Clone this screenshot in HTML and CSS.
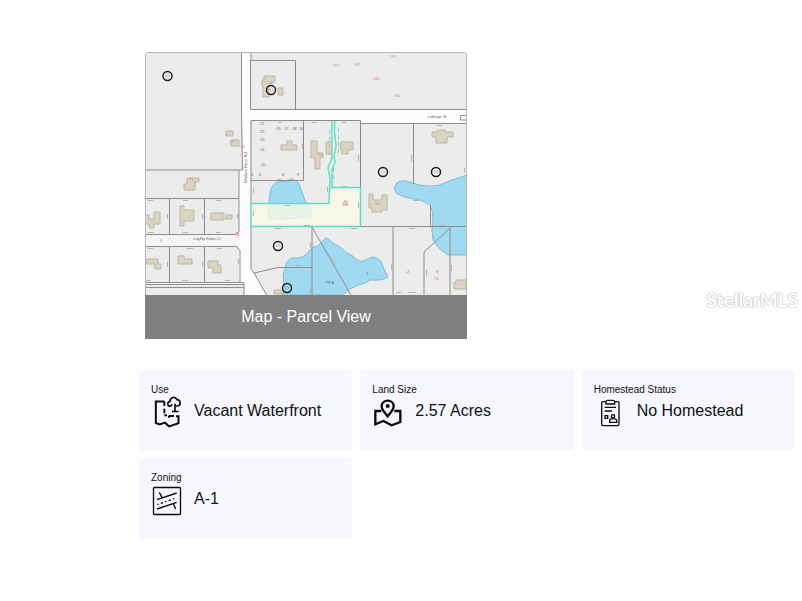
FILE: index.html
```html
<!DOCTYPE html>
<html lang="en">
<head>
<meta charset="utf-8">
<meta name="viewport" content="width=device-width, initial-scale=1">
<title>Parcel details</title>
<link rel="stylesheet" href="styles.css">
</head>
<body>
<main class="page">
  <figure class="parcel">
    <svg class="map" viewBox="145 52 322 243" role="img" aria-label="Parcel map">
      <rect class="road" x="145" y="52" width="322" height="243"/>
      <!-- land -->
      <g class="land">
        <path d="M145 52.5H241.5L242.5 170H145Z"/>
        <path d="M145 170H239L239 282H145Z"/>
        <path d="M145 284H244V295H145Z"/>
        <path d="M251 52.5H467V110H251Z"/>
        <path d="M250.500 120.500H360.500V123.500H467V295H266.500L254 273L251 269Z"/>
      </g>
      <path class="lane" d="M145 235H238V246H145Z"/>
      <!-- water -->
      <g class="water">
        <path d="M268 217L269 203L270 193Q272 184 277 182Q285 182 292 179Q297 180 299 184L305 200L313 216Q310 219 303 217Q296 220 290 218Q280 221 268 217Z"/>
        <path d="M282 295L285 289L283 275Q285 270 286 264Q288 258 294 258Q304 259 309 251Q312 247 318 246L326 237.500L333 243L340 247L347 253Q353 255 357 260Q361 263 366 260Q374 254 381 261L384 269L388 277Q382 281 370 280Q365 284 358 285L348 290L343 295Z"/>
        <path d="M467 175Q457 178 447 182Q438 187 429 186Q419 186 410 182Q400 179 396 184Q393 189 396 193Q402 197 413 199Q422 199 430 205Q434 212 433 220Q431 230 433 240Q437 248 448 255H467Z"/>
      </g>
      <path class="subject-fill" d="M251 203.500H329L330 178L328 168L332 158V121H335V160L332 170V187.500H360.500V226.500H251Z"/>
      <!-- lot lines -->
      <g class="lines">
        <path d="M145 52.500H467M241.500 52V112L242.500 170H145M251 52V60"/>
        <path d="M239 170V232L235 235M145 198.500H239M169.500 198V234M204.500 198V234M145 234.500H235M145 246.500H236L240 250V282M169.500 246V282M204.500 246V282M145 282.500H244V295M145 284.500H244M145 287.500H244"/>
        <path d="M250.500 60.500H295.500V110M250.500 60V109.500H467"/>
        <path d="M251 204V120.500H360.500V226.500H467M303.500 120V180.500H251M360.500 123.500H467M466.500 52V295M413.500 123V184M430.500 205V226M251 226V269L254 273L266.500 295M254 273L278 267.500H312M312 226V295M312 227L351 295M393 226V295M424 295V252L449 229M450 226V295"/>
        <path d="M467 115.500H460.500V120H467"/>
      </g>
      <path class="subject" d="M334.500 121V133L336 145L334 157L335 162L332 170V187.500H360.500V226.500H251V203.500H329L330 178L328 168L332 158V121"/>
      <!-- buildings -->
      <g class="building">
        <path d="M264 76H275V82H272V86H269V97H263V86H262V80H264ZM278 88H283V95H278Z"/>
        <path d="M287 141H292V145H297V150H281V145H287Z"/>
        <path d="M311 141H317V153H323V158H320V169H315V158H311ZM326 142H332V154H326Z"/>
        <path d="M341 142H353V150H348V154H342V149H340Z"/>
        <path d="M432 132H438V130H446V132H453V137H447V143H436V137H432Z"/>
        <path d="M369 194H373V200H382V195H387V210H382V212H372V208H369Z"/>
        <path d="M226 131H233V136H226ZM231 140H239V146H231Z"/>
        <path d="M187 178H199V182H195V190H184V184H187Z"/>
        <path d="M145 215H149V219H154V212H160V224H154V228H149V224H145Z"/>
        <path d="M180 206H184V210H194V221H184V226H180Z"/>
        <path d="M211 213H224V220H211ZM226 215H232V219H226Z"/>
        <path d="M146 259H158V264H161V269H155V264H146Z"/>
        <path d="M178 256H184V259H192V264H178Z"/>
        <path d="M208 261H218V265H221V273H213V268H208Z"/>
        <path d="M456 280H466V289H454V282H456Z"/>
        <path d="M274 290H282V294H274Z"/>
      </g>
      <!-- parcel markers -->
      <g class="marker">
        <circle cx="167.500" cy="76" r="4.500"/>
        <circle cx="271" cy="90" r="4.500"/>
        <circle cx="383" cy="172" r="4.500"/>
        <circle cx="436" cy="172" r="4.500"/>
        <circle cx="278" cy="246" r="4.500"/>
        <circle cx="287" cy="288" r="4.500"/>
      </g>
      <path class="alert" d="M345.500 200L348 205H343ZM235 234L238 232V236Z"/>
      <g class="tick">
        <path d="M148 200.500H153M183 200.500H188M216 200.500H221M148 232.500H154M183 232.500H188M216 232.500H221M148 248.500H153M187 248.500H193M217 248.500H222M146 280.500H151M182 280.500H188M225 280.500H230"/>
        <path d="M167.500 214V219M202.500 214V219M237.500 214V219M167.500 262V267M202.500 262V267M238.500 259V264M253.500 188V193M253.500 211V216M327.500 187V192M358.500 202V208M302.500 144V149M411.500 155V161M358.500 155V161M310.500 242V248M310.500 288V293M391.500 264V270M426.500 270V276M451.500 265V271M432.500 212V217M464.500 168V173"/>
        <path d="M284 205.500H290M275 228.500H281M304 225.500H310M351 228.500H357M295 265.500H301M409 228.500H415M438 225.500H445M342 186.500H347M277 179.500H281M396 292.500H401M408 292.500H416M312 122.500H317M342 122.500H346M278 122.500H282M331 257L336 264M437 125.500H442M413 200.500H420"/>
        <path class="survey" d="M329.500 130V155M338.500 128V155M333.500 168V183" stroke-dasharray="4 3"/>
      </g>
      <g class="names">
        <text x="428" y="118">Lidstige St</text>
        <text x="193" y="240">Cayflip Knox Ct</text>
        <text x="325" y="284">TR A</text>
        <text transform="translate(247 183) rotate(-90)">Wallace Rose Rd</text>
        <text x="260" y="125">21</text><text x="260" y="133">22</text><text x="260" y="141">23</text><text x="260" y="151">24</text><text x="261" y="166">20</text>
        <text x="276" y="130">19</text><text x="284" y="130">17</text><text x="292" y="130">18</text><text x="299" y="130">16</text>
        <text x="251" y="176">5</text><text x="259" y="176">6</text><text x="282" y="176">8</text><text x="297" y="176">9</text>
        <text x="160" y="242">1</text><text x="407" y="273">2</text><text x="436" y="273">3</text><text x="366" y="275">1</text>
      </g>
      <g class="acres">
        <text x="167.500" y="77">1.7</text><text x="271" y="91">0.4</text><text x="383" y="173">1.2</text><text x="436" y="173">1.3</text><text x="278" y="247">2.0</text><text x="287" y="289">1.9</text>
      </g>
      <g class="red">
        <text x="333" y="67">1974</text><text x="354" y="66">1975</text><text x="390" y="58">1976</text><text x="373" y="80">1980</text><text x="394" y="97">1982</text>
        <text x="240" y="148">166</text><text x="229" y="143">170</text><text x="343" y="205">161</text><text x="434" y="280">196</text><text x="318" y="156">142</text><text x="267" y="84">120</text><text x="375" y="205">164</text><text x="190" y="181">91</text>
      </g>
      <path class="frame" d="M145.500 295V52.500H466.500V295"/>
    </svg>
    <figcaption class="caption">Map - Parcel View</figcaption>
  </figure>

  <dl class="facts">
    <div class="fact">
      <dt class="label">Use</dt>
      <dd class="value">
        <svg class="icon" viewBox="63 93 96 96" aria-hidden="true">
          <path d="M104 109.500H77.500V174L89 178L105 173L117 184L145.500 174.500V153.500H138" stroke-width="6"/>
          <path d="M103 110V123M103 131V145M103 151H111M117 153H132M117 152V158" stroke-width="6"/>
          <path d="M121 124C112 124 110 112 120 109C121 95 136 94 141 104C152 104 154 121 143 123H137M121 124L127 118M135 116V139M126 139.500H146" stroke-width="5"/>
        </svg>
        Vacant Waterfront
      </dd>
    </div>
    <div class="fact">
      <dt class="label">Land Size</dt>
      <dd class="value">
        <svg class="icon" viewBox="52 93 96 96" aria-hidden="true">
          <path d="M80 138H62V178L86 168L111 181L137 171V138H119" stroke-width="7"/>
          <path d="M99 154C93 146 81 136 81 124C81 101 117 101 117 124C117 136 105 146 99 154Z" stroke-width="7"/>
          <circle class="solid" cx="99" cy="123" r="6"/>
        </svg>
        2.57 Acres
      </dd>
    </div>
    <div class="fact">
      <dt class="label">Homestead Status</dt>
      <dd class="value">
        <svg class="icon" viewBox="56 93 96 96" aria-hidden="true">
          <path d="M92 110H82Q79 110 79 114V178Q79 182 83 182H127Q131 182 131 178V114Q131 110 127 110H118M96 106H114Q118 106 118 112V117H92V112Q92 106 96 106Z" stroke-width="4"/>
          <path d="M88 127H122M88 138H110M89 152H97V160H89ZM103 172H124V165Q122 161 113 161Q104 161 103 166Z" stroke-width="4"/>
          <circle cx="113" cy="154" r="5" stroke-width="4"/>
        </svg>
        No Homestead
      </dd>
    </div>
    <div class="fact">
      <dt class="label">Zoning</dt>
      <dd class="value">
        <svg class="icon" viewBox="63 93 96 96" aria-hidden="true">
          <rect x="70.500" y="103.500" width="81" height="81" rx="3" stroke-width="4"/>
          <path d="M81 140L140 120M81 168L140 148M88 118L96 134M130 152L137 168" stroke-width="4"/>
          <path d="M82 155L138 135" stroke-width="4" stroke-dasharray="4 7 7 7"/>
        </svg>
        A-1
      </dd>
    </div>
  </dl>
</main>
<div class="watermark">StellarMLS</div>
</body>
</html>
```
FILE: styles.css
```css
body {
  margin: 0;
  background: #fff;
  color: #111;
  font-family: "Liberation Sans", Arial, sans-serif;
}

.page {
  padding: 52px 7px 52px 139px;
}

.parcel {
  max-width: 322px;
  margin: 0 6px 31px;
  overflow: hidden;
  border-radius: 4px 4px 0 0;
}

.map {
  display: block;
  width: 100%;
  fill: none;
}

.road { fill: #fefefe; }
.land { fill: #ececec; }
.lane { fill: #f4f4f4; }
.water { fill: #9fdaf1; stroke: #7fb9d8; stroke-width: 1; }
.subject-fill { fill: #fafae6; fill-opacity: 0.8; }
.lines { stroke: #8c8c8c; stroke-width: 1; }
.subject { stroke: #5cdcc4; stroke-width: 1.5; }
.survey { stroke: #7fcfbf; }
.building { fill: #d9d5c2; stroke: #bbb6a2; stroke-width: 1; }
.marker { stroke: #1c1c1c; stroke-width: 1.5; }
.alert { stroke: #e09a94; stroke-width: 1; }
.tick { stroke: #b4b4b4; stroke-width: 1; }
.names { fill: #666; font-size: 4px; }
.acres { fill: #888; font-size: 3px; text-anchor: middle; }
.red { fill: #dc8a84; font-size: 3px; }
.frame { stroke: #b8b8b8; stroke-width: 1; }

.caption {
  background: #7f7f7f;
  color: #fff;
  font-size: 16px;
  line-height: 44px;
  text-align: center;
}

.facts {
  display: grid;
  grid-template-columns: repeat(3, 1fr);
  gap: 8px;
  margin: 0;
}

.fact {
  padding: 13px 12px 22px;
  border-radius: 3px;
  background: #f6f6fe;
}

.label {
  font-size: 10px;
  line-height: 13px;
}

.value {
  display: flex;
  gap: 11px;
  margin: 0;
  font-size: 16px;
  line-height: 30px;
}

.icon {
  flex: none;
  width: 32px;
  height: 32px;
  fill: none;
  stroke: #0c0c10;
}

.icon .solid {
  fill: #0c0c10;
  stroke: none;
}

.watermark {
  position: absolute;
  top: 288px;
  right: 4px;
  color: #fff;
  font-family: Lato, sans-serif;
  font-size: 19px;
  font-weight: 700;
  line-height: 24px;
  text-shadow: 0 0 1px #aaa, 0 0 2px #bbb;
}
```
